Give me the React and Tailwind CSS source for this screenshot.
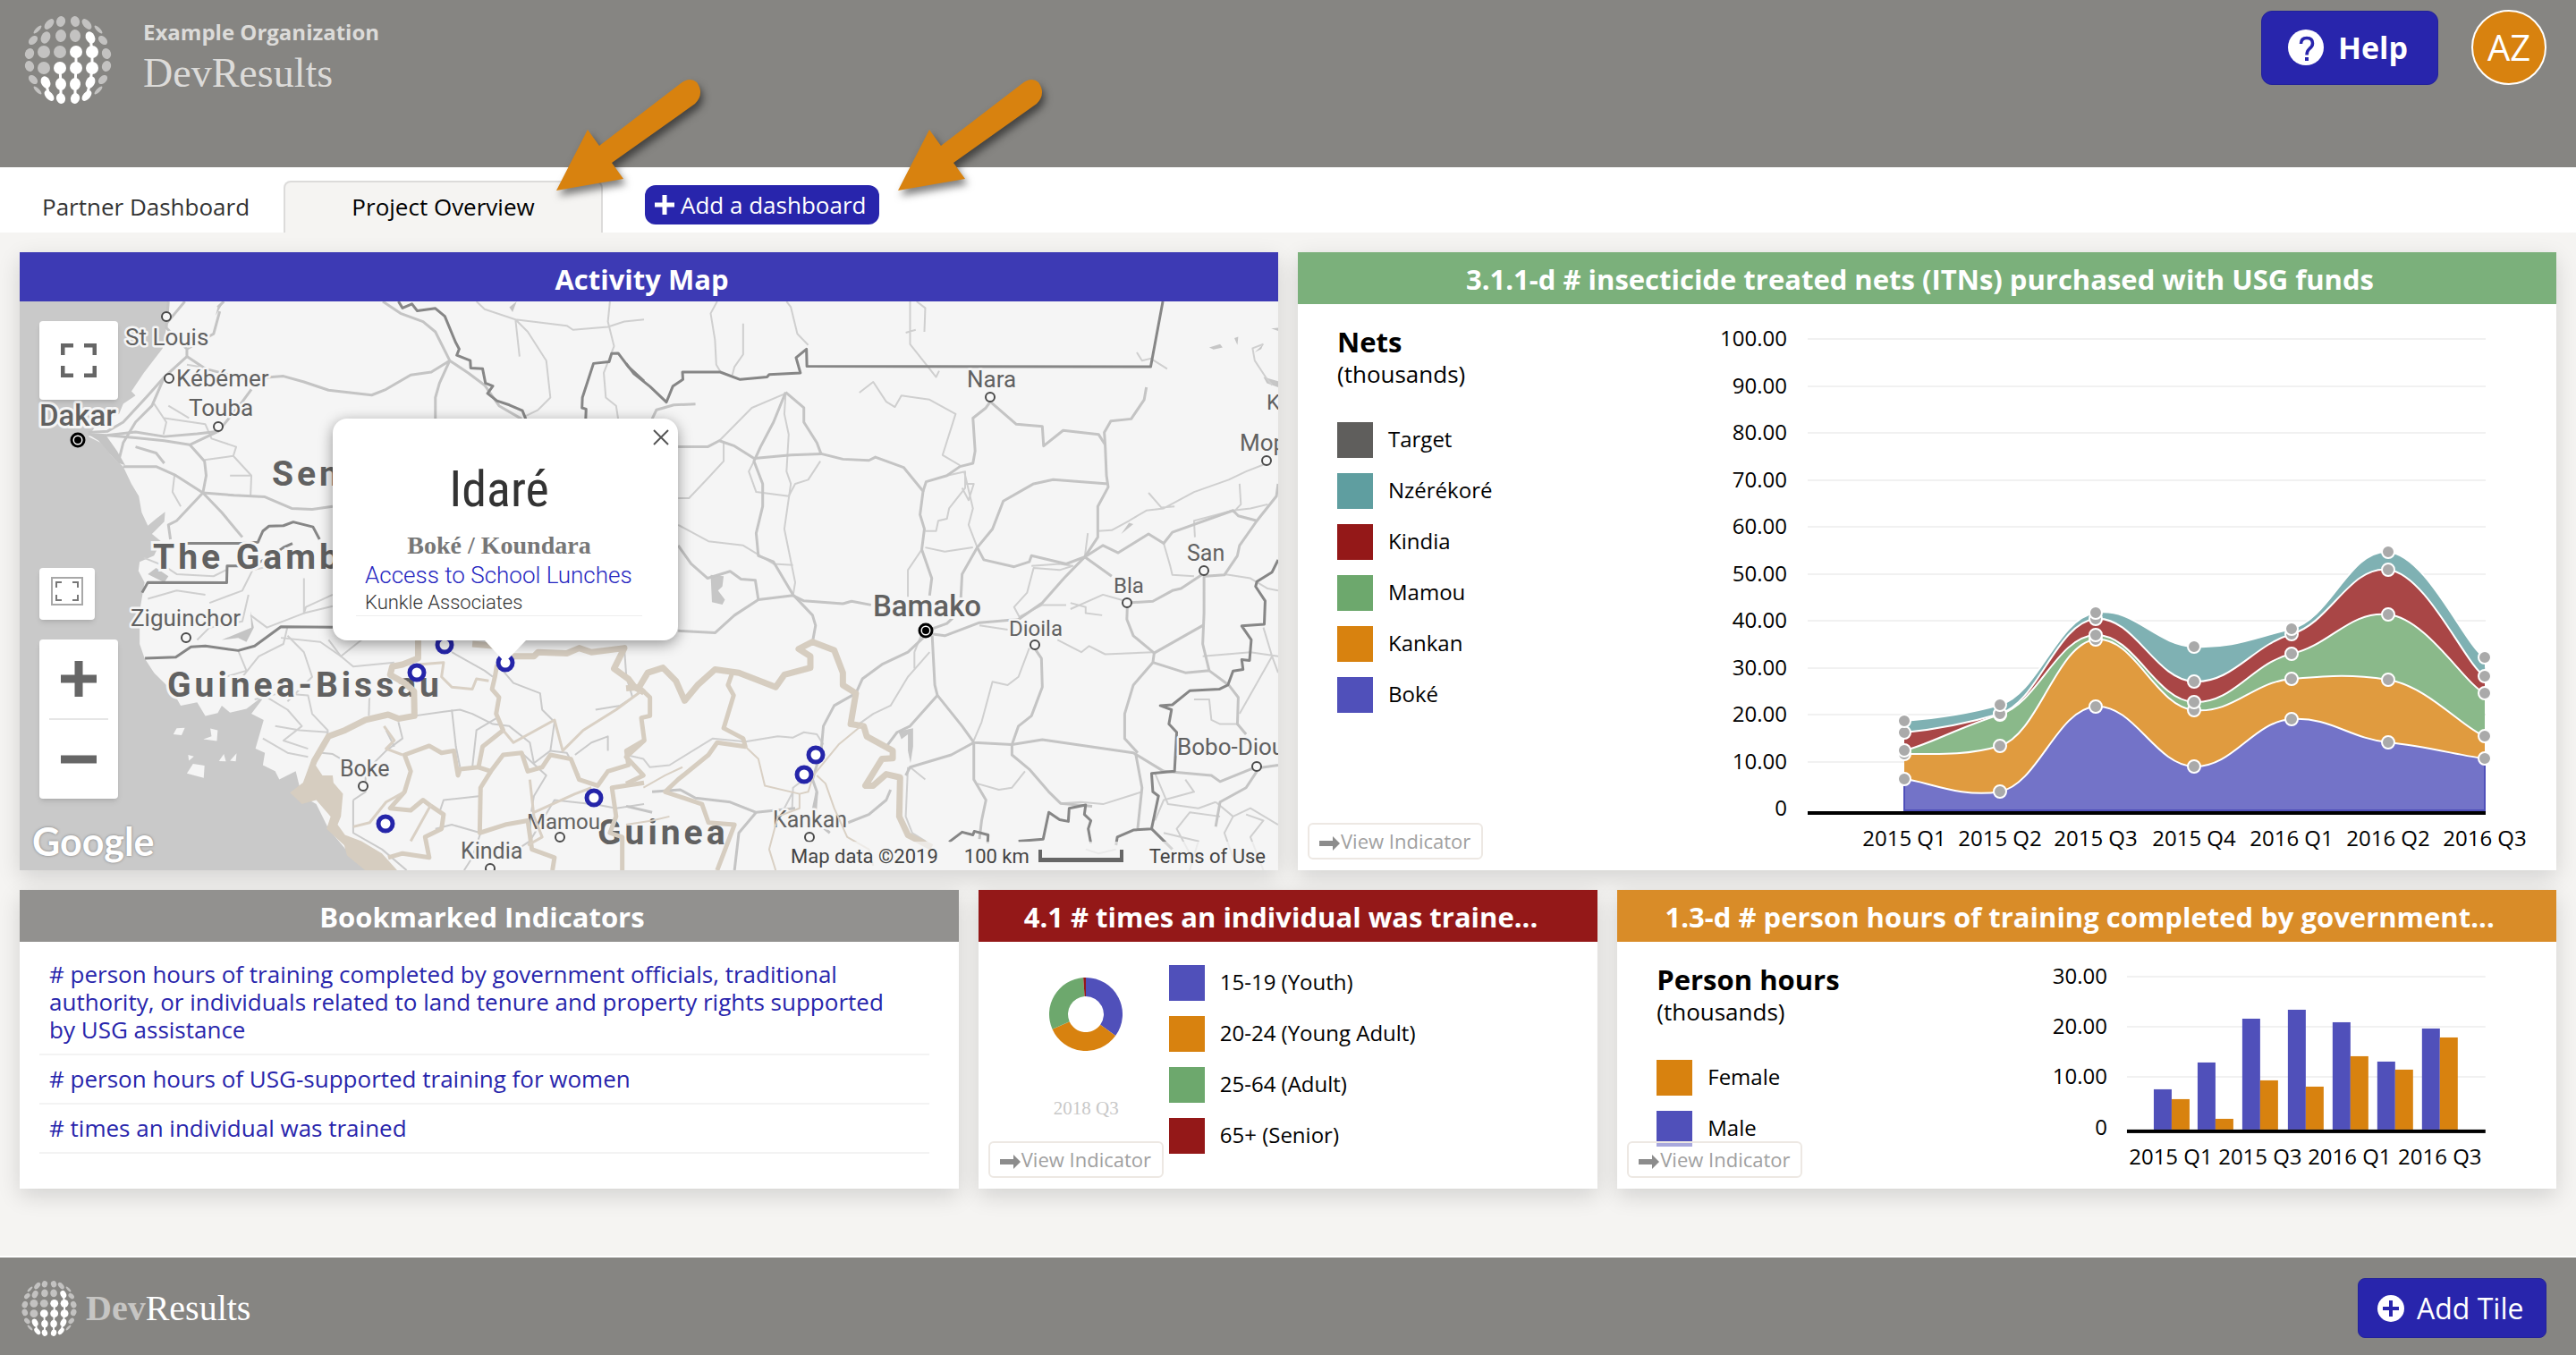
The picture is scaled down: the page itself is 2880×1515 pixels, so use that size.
import React from "react";

const SERIF = "font-['Roboto_Slab','Liberation_Serif',serif]";

/* ---------- shared pieces ---------- */

/* One quadrant of the globe: x, y, rx, ry, tilt; the others are its mirror images. */
const GLOBE_DOTS = [
  [8, 43, 5, 6, 15],
  [21, 40, 4, 7, 40],
  [34, 34, 2, 6, 45],
  [8, 27, 6, 7, 5],
  [25, 25, 5, 7, 25],
  [39, 22, 4, 6, 45],
  [9, 9, 7, 7, 0],
  [27, 9, 7, 7, 0],
  [43, 7, 5, 6, 20],
];
const LIT = ["25,-25", "9,-9", "27,-9", "-9,9", "9,9", "27,9", "-25,25", "-8,27", "8,27", "25,25", "-21,40", "-8,43", "8,43", "21,40"];

function Globe({ className }) {
  return (
    <svg viewBox="-49 -49 98 98" className={className} aria-hidden="true">
      {[[1, 1], [-1, 1], [1, -1], [-1, -1]].map(([sx, sy]) =>
        GLOBE_DOTS.map(([x, y, rx, ry, tilt]) => {
          const cx = x * sx;
          const cy = y * sy;
          return (
            <ellipse
              key={`${cx},${cy}`}
              cx={cx}
              cy={cy}
              rx={rx}
              ry={ry}
              transform={`rotate(${tilt * sx * sy} ${cx} ${cy})`}
              fill="#fff"
              opacity={LIT.includes(`${cx},${cy}`) ? 1 : 0.5}
            />
          );
        })
      )}
      <path
        d="M25 -25L27 -9M9 -9V9M27 -9V9L25 25M9 9L8 27V43M-9 9L-8 27V43M-25 25L-21 40M25 25L21 40"
        stroke="#fff"
        strokeWidth="3"
        fill="none"
      />
    </svg>
  );
}

function Arrow({ className }) {
  return (
    <svg viewBox="0 0 180 150" className={className} aria-hidden="true">
      <path
        d="M8 133L43 65L56 83L146 14Q157 5 165 12Q174 25 163 36L70 102L83 120Z"
        fill="#d8820f"
      />
    </svg>
  );
}

function Tile({ title, color, span, headHeight = "h-[58px]", children }) {
  return (
    <section className={`relative flex flex-col bg-white shadow-[0_8px_24px_rgba(0,0,0,0.14)] ${span}`}>
      <h2 className={`${headHeight} ${color} shrink-0 truncate pr-8 pl-4 text-center text-[31px] leading-[60px] font-bold text-white`}>
        {title}
      </h2>
      {children}
    </section>
  );
}

function ViewIndicator() {
  return (
    <button
      type="button"
      className="absolute bottom-3 left-[11px] flex h-[41px] w-[196px] items-center rounded-md border-2 border-[#ede8e3] bg-white/50 pl-[11px] text-[22px] text-[#a0a0a0]"
    >
      <svg viewBox="0 0 24 20" className="mt-1 h-5 w-6 shrink-0" aria-hidden="true">
        <path d="M0 7H15V2L23 10L15 18V13H0Z" fill="#8c8c8c" />
      </svg>
      <span className="whitespace-nowrap">View Indicator</span>
    </button>
  );
}

function Legend({ items }) {
  return (
    <ul className="flex flex-col gap-[17px]">
      {items.map(([label, swatch]) => (
        <li key={label} className="flex h-10 items-center gap-[17px] whitespace-nowrap text-2xl text-black">
          <span className={`size-10 shrink-0 ${swatch}`} />
          <span className="pb-0.5">{label}</span>
        </li>
      ))}
    </ul>
  );
}

/* ---------- map ---------- */

const WEST_ROADS = [
  "M410 146L405 210L455 262L455 280L400 330L360 375L300 440L262 462L215 465",
  "M455 280L500 310L600 335L690 328L740 342L800 362L905 374L940 360L1000 325L1050 318L1095 290",
  "M932 146L975 175L1030 195L1060 220L1095 290L1140 320L1180 350L1215 400L1270 432",
  "M1095 290L1070 345L1060 380L1060 432",
  "M215 470L260 472L330 464L400 475L480 468L532 462",
  "M262 472L330 478L400 485L462 495L532 462L590 390L612 360",
  "M400 330L370 400L330 440L300 490L290 530",
  "M462 495L498 535L502 570L494 612L430 680L410 690L415 725",
  "M300 548L380 548L425 568L494 612L540 660L590 720",
  "M494 612L570 618L645 622L710 650L760 652L810 645",
  "M400 540L380 515L330 500M450 146L405 200M530 160L545 146M455 262L520 225L535 170",
];
const WEST_LANES = [
  "M375 395L405 440L398 470M410 400L460 430M425 568L420 610L440 645M400 430L500 445L515 480L575 500L568 522L498 532",
  "M568 522L612 570L610 620M560 570L612 570",
  "M1160 146L1180 165L1255 190L1265 280M1255 190L1380 205L1395 215L1480 208L1520 195L1568 190M1255 190L1285 220L1330 290L1340 380L1310 410L1280 425",
  "M1485 146L1480 195L1495 255L1470 320L1475 380L1500 400L1505 432",
  "M455 300L485 305M430 340L455 330",
  "M350 770L400 790L430 810L520 815L550 800M360 870L430 850L500 860",
  "M510 880L590 850L615 800L660 790L680 770M610 910L650 940L740 905L810 888",
  "M480 970L510 940L590 925L605 860M740 820L740 905L745 890L810 860",
  "M700 938L690 980L630 1010L590 1060M700 960L740 1000L760 1060L700 1120M800 970L830 1010L860 1035L960 1025",
  "M580 996L600 1045L550 1060M684 965L780 975L830 1010L880 970L880 945M620 1115L680 1100L750 1105L760 1150L798 1190L795 1215",
  "M650 1110L700 1140L735 1180L690 1215L750 1235M900 1090L898 1155M640 1210L700 1245L750 1255M670 1180L730 1190L800 1195",
];
const EAST_OF_WEST_ROADS = [
  "M1100 1000L1180 1045L1200 1060M1009 1155L1080 1145L1120 1140L1150 1150L1200 1175L1240 1180L1290 1220L1300 1270L1340 1240L1350 1170L1320 1140L1315 1100L1250 1075L1220 1040",
  "M1520 990L1525 1060L1540 1110L1510 1130L1450 1140",
  "M860 1360L890 1340L890 1290L940 1240L980 1210L970 1170M860 1360L860 1440L930 1480L990 1531",
  "M783 1245L810 1248L865 1280M940 1190L960 1230M1100 1140L1110 1230L1120 1280",
  "M1340 1240L1380 1245L1410 1300M1400 1250L1440 1220L1480 1205L1480 1240M1070 1390L1080 1360L1170 1350",
  "M1446 1370L1500 1380L1568 1370M1210 1160L1160 1190L1150 1280M1230 1500L1290 1460L1350 1360L1440 1370",
  "M1270 1245L1330 1300L1300 1350L1290 1410M1060 1430L1100 1420L1170 1440L1150 1500L1130 1531",
];
const EAST_ROADS = [
  "M368 367L340 440L310 500L295 535L315 590L315 645L300 710L305 765L340 780L385 860L430 910L437 935L430 975",
  "M120 500L188 500L215 485L250 498L295 528L380 520L450 517L500 530L560 533L575 525L640 550L685 608L678 665L688 700L682 750L705 820L700 862",
  "M368 367L410 405L410 440L440 490L450 518",
  "M120 740L150 785L188 820L240 803L265 822L298 825L305 872L385 862L410 875L500 882L520 876L565 885",
  "M305 872L250 910L205 953L120 948",
  "M840 390L830 405L800 430L805 510L800 540L770 548L740 570L692 585L685 608",
  "M840 390L900 445L960 450L963 498L1008 460L1090 470L1105 495L1108 570L1112 598L1088 645L1088 720L1058 768L1015 785L935 765L930 780L895 792L825 775L810 745L845 700L870 632L940 590L985 580L1112 590",
  "M1105 495L1103 465L1118 437L1165 432L1195 385L1200 355M810 745L775 810L772 870",
  "M1058 768L1010 820L960 880L905 920L815 928L735 960L700 955L692 948",
  "M1058 768L1120 815M1058 768L1100 740L1135 758L1205 712L1240 735L1260 708L1400 655L1412 668L1455 680L1500 620L1504 590M1455 680L1415 740L1410 765L1380 812L1335 815",
  "M692 948L740 930L760 910M690 960L650 1000L590 1030L545 1065L530 1100L480 1130L455 1180L450 1240L430 1310L440 1340L432 1380",
  "M706 960L712 1080L718 1105L775 1180L802 1220L890 1225L960 1213L1170 1245L1240 1290",
  "M718 1105L655 1180L625 1195L600 1230M942 990L958 1015L960 1085L935 1155L905 1180L890 1225L890 1250L930 1285L975 1340L1002 1368L1075 1375",
  "M802 1220L802 1310L830 1360L820 1410L815 1455M802 1220L750 1250L655 1280L645 1300M1175 1245L1190 1330L1180 1430",
  "M1156 890L1155 920L1170 960L1218 1002L1215 1025L1170 1080L1150 1150L1150 1210L1180 1245",
  "M1156 880L1215 876L1260 850L1280 845L1333 808L1333 905L1330 980L1345 1045L1290 1050L1215 1025M1218 1002L1330 935M1345 1045L1390 1080L1412 1110L1410 1175L1430 1200",
  "M1504 1275L1440 1285L1370 1315L1350 1300L1240 1290M1455 1290L1430 1330L1370 1365L1360 1425",
  "M0 1375L60 1390M60 1340L125 1335L160 1355L240 1365L300 1390L390 1380M300 1390L260 1440L250 1531M512 1415L560 1395L600 1360L610 1335M440 1340L435 1410L470 1440",
  "M60 432L70 410L110 398L160 396",
];
const EAST_LANES = [
  "M210 146L195 175L205 240L208 300L218 318M270 200L270 275L250 305L245 325M370 146L380 160L395 225L420 252M655 146L655 250L700 310L715 330L722 315M670 146L690 162L688 220M645 222L668 215",
  "M215 485L290 405L368 370M368 370L365 420L375 470L370 560L380 590L365 700L390 830L385 862M538 368L570 342L600 390L620 403L635 375L700 385L760 420L730 520L770 545",
  "M295 535L283 560L300 610L375 620L390 590L420 580L448 535M225 490L225 535L190 575L145 625L120 625M120 690L190 730L270 740L340 785L385 788",
  "M780 560L800 650L790 690L810 745M740 570L782 560L782 600L745 650L740 675L720 680L715 705L690 705M690 745L735 755L800 745M780 590L802 590L790 630L775 600M682 750L650 800L650 865M665 1040L665 1000L680 960",
  "M1088 705L1120 703L1160 680L1200 655L1240 650L1310 610L1390 580L1430 560L1478 540M1205 612L1235 648L1265 645M1415 590L1418 640L1400 660M1480 640L1440 650L1400 655L1310 680L1312 720M1058 768L1065 710",
  "M935 790L1000 785L1030 790L1000 800L940 795L925 855L895 890L910 920M905 915L960 885L1015 885M1025 880L1060 890L1060 905L1098 910M1025 895L1100 860L1150 875M1240 735L1255 790L1260 812L1310 815M1380 810L1440 820L1480 845L1504 850",
  "M815 935L880 945M995 970L1050 1000L1068 985L1105 1005L1215 1000M1330 1010L1440 1000L1504 1010M1470 940L1490 1010L1504 1050M1490 1010L1415 1150M930 990L905 1060L880 1080L845 1072L820 1170L802 1215M700 1000L650 1060L610 1130L570 1150L530 1180",
  "M275 1218L350 1205L385 1208L410 1195L440 1200L455 1225M0 1250L40 1260L55 1280L100 1275L200 1210L275 1218M385 1340L360 1390L340 1400M410 1310L385 1330L383 1380M810 1320L860 1335L890 1330L920 1290M1002 1368L1050 1365L1100 1370L1190 1340",
  "M1220 1295L1250 1370L1320 1380L1360 1365M1290 1310L1310 1340L1240 1360L1220 1410M1360 1365L1400 1400L1440 1380L1504 1420M1310 1115L1345 1115L1350 1165L1370 1175L1410 1175M1370 1400L1300 1390L1270 1430L1300 1490M1400 1400L1380 1440L1400 1500M1430 1395L1470 1410L1440 1450L1470 1531M1240 1440L1320 1460L1300 1531",
  "M650 1280L645 1400L660 1440L690 1460M655 1280L690 1310M1060 1480L1090 1490L1130 1480M1450 290L1445 260L1470 250M1450 290L1475 330L1490 350M1178 270L1190 290L1210 285L1248 310",
];

const CITIES = [
  ["St Louis", 118, 49, 26, 164, 17],
  ["Kébémer", 175, 95, 26, 167, 86],
  ["Touba", 189, 128, 26, 222, 140],
  ["Ziguinchor", 124, 363, 26, 186, 376],
  ["Boke", 358, 531, 25, 384, 542],
  ["Mamou", 567, 590, 24, 604, 599],
  ["Kindia", 493, 623, 25, 526, 634],
  ["Nara", 1059, 96, 26, 1085, 107],
  ["K", 1394, 121, 24, null, null],
  ["Mop", 1364, 167, 26, 1394, 178],
  ["San", 1305, 290, 25, 1324, 301],
  ["Bla", 1223, 326, 24, 1238, 337],
  ["Dioila", 1106, 374, 24, 1135, 384],
  ["Bobo-Diou", 1294, 507, 26, 1383, 520],
  ["Kankan", 842, 588, 25, 883, 599],
];

const COUNTRIES = [
  ["Senegal", 282, 206],
  ["The Gambia", 149, 299],
  ["Guinea-Bissau", 165, 442],
  ["Guinea", 646, 607],
];

const SITES = [
  [475, 384],
  [444, 415],
  [543, 404],
  [642, 555],
  [409, 584],
  [890, 507],
  [877, 529],
];

function Strokes({ paths, color, width }) {
  return paths.map((d) => (
    <path key={d} d={d} stroke={color} strokeWidth={width} strokeLinejoin="round" fill="none" vectorEffect="non-scaling-stroke" />
  ));
}

function MapDrawing() {
  return (
    <svg
      viewBox="0 0 1407 636"
      preserveAspectRatio="xMidYMid slice"
      className="block h-[636px] w-full bg-[#f5f5f5] font-['Roboto',sans-serif]"
      role="img"
      aria-label="Map of Guinea and its neighbours"
    >
      <g transform="translate(-22 -67) scale(0.4592)">
        <path
          d="M40 140H410L405 210L396 260L350 320L320 365L330 375L300 395L290 420L240 440L215 475L245 490L270 520L300 548L320 590L338 620L345 660L360 692L380 675L402 658L400 682L370 712L392 730L375 765L340 780L337 802L352 830L340 900L340 980L352 1015L375 1050L420 1095L440 1130L480 1122L500 1155L530 1148L540 1130L560 1147L600 1138L650 1100L612 1150L642 1165L622 1235L645 1245L640 1275L670 1290L680 1310L720 1290L735 1350L770 1370L800 1430L850 1490L920 1540H40Z"
          fill="#c9c9c9"
        />
        <path d="M215 470L260 475L285 510L305 545L290 540L265 515L240 485ZM545 146L525 180L530 160ZM1240 160L1258 146L1248 172ZM610 900L618 940L600 975L580 965L540 970L612 940ZM360 810L380 795L410 815L400 830Z" fill="#c4c4c4" />
        <path d="M422 1200L430 1185L450 1184L442 1202ZM495 1212L515 1205L512 1186L530 1190L528 1216ZM455 1295L470 1272L498 1276L496 1306ZM458 1250L472 1254L460 1264ZM533 1265L545 1248L550 1266ZM560 1264L576 1246L574 1266Z" fill="#f5f5f5" />
        <Strokes paths={WEST_LANES} color="#cfcfcf" width="2" />
        <Strokes paths={WEST_ROADS} color="#c4c4c4" width="3" />
        <Strokes paths={EAST_OF_WEST_ROADS} color="#cacaca" width="2" />
        <Strokes
          color="#868686"
          width="3"
          paths={[
            "M970 146L980 162L1003 152L1016 169L1060 163L1083 182L1109 245L1118 262L1112 277L1145 290L1146 308L1175 310L1182 345L1200 352L1187 370L1210 388L1240 398L1272 412L1280 432",
            "M1426 432L1427 408L1417 405L1418 380L1445 297L1483 293L1489 273L1505 272L1530 305L1568 340",
            "M455 735H590L628 732L640 705L655 693L690 692L714 683L762 695L778 725",
            "M346 855L360 830L552 831L553 790L610 790L655 770L690 745L712 735",
            "M353 1015L428 1012L465 987L500 985L580 996L620 985L684 938L810 939",
          ]}
        />
      </g>
      <g transform="translate(678 -67) scale(0.4847 0.4592)">
        <path d="M195 812L225 815L222 840L212 850L228 872L222 884L198 878ZM628 1193L662 1185L662 1230L656 1270L650 1240L650 1200L635 1212ZM1470 330L1504 340V355L1478 345ZM1345 258L1370 250L1376 258L1355 263ZM1403 235L1412 232L1410 252ZM1450 270L1470 250L1465 262ZM1142 712L1160 685L1170 688ZM1488 212L1504 210V218Z" fill="#c6c6c6" />
        <Strokes paths={EAST_LANES} color="#cfcfcf" width="2" />
        <Strokes paths={EAST_ROADS} color="#c4c4c4" width="3" />
        <Strokes
          color="#868686"
          width="3"
          paths={[
            "M0 297L18 322L55 353L93 391L108 352L131 336L130 318H217L263 336L325 330L330 324L402 320L392 283L416 262L417 304L1210 305L1238 146",
            "M1504 775L1490 805L1455 828L1452 840L1474 875L1472 932L1420 936L1442 970L1438 1020L1420 1018L1423 1042L1400 1046L1388 1080L1368 1090L1300 1094L1260 1128L1232 1130L1258 1140L1252 1175L1270 1195L1265 1290L1212 1295L1215 1340L1228 1350L1212 1430L1170 1433L1133 1450L1130 1470",
            "M745 1462L775 1438L800 1445L803 1436L835 1445L834 1465M905 1460L962 1455L975 1390L1000 1408L1020 1412L1022 1380L1060 1372L1057 1395L1072 1410L1066 1430L1072 1465M1212 1430L1260 1480",
          ]}
        />
      </g>

      {COUNTRIES.map(([name, x, y]) => (
        <text key={name} x={x} y={y} fontSize="39" fontWeight="700" fill="#616161" stroke="#f5f5f5" strokeWidth="6" paintOrder="stroke" className="tracking-[4px]">
          {name}
        </text>
      ))}
      {CITIES.map(([name, x, y, size, cx, cy]) => (
        <g key={name}>
          <text x={x} y={y} fontSize={size} fill="#616161" stroke="#f5f5f5" strokeWidth="5" strokeLinejoin="round" paintOrder="stroke">
            {name}
          </text>
          {cx !== null && <circle cx={cx} cy={cy} r="5" fill="#f8f8f8" stroke="#4a4a4a" strokeWidth="2" />}
        </g>
      ))}
      {[
        ["Dakar", 22, 139, 65, 155],
        ["Bamako", 954, 352, 1013, 368],
      ].map(([name, x, y, cx, cy]) => (
        <g key={name}>
          <text x={x} y={y} fontSize="33" fontWeight="500" fill="#616161" stroke="#f5f5f5" strokeWidth="6" strokeLinejoin="round" paintOrder="stroke">
            {name}
          </text>
          <circle cx={cx} cy={cy} r="7" fill="#fff" stroke="#000" strokeWidth="3" />
          <circle cx={cx} cy={cy} r="4" />
        </g>
      ))}

      <g transform="translate(-22 -67) scale(0.4592)">
        <path
          d="M706 1342L745 1312L765 1270L785 1300L810 1300L812 1318L835 1345L830 1400L822 1420L840 1445L880 1460L930 1490L975 1540H900L845 1495L838 1470L795 1430L805 1400L770 1360L735 1370Z"
          fill="#d6cdc0"
        />
        <Strokes
          color="#d6cdc0"
          width="7"
          paths={[
            "M1018 971V1015L980 1030L955 1035L950 1055L985 1075L1008 1095L1009 1155L970 1162L945 1152L890 1165L840 1190L800 1205L765 1265L745 1320",
            "M1150 980L1205 985L1230 1010L1300 1010L1310 1000L1380 1003L1410 990L1440 1000L1520 990L1495 1040L1530 1065L1545 1085L1568 1098",
          ]}
        />
        <Strokes
          color="#d6cdc0"
          width="5"
          paths={[
            "M1210 1030L1205 1060L1198 1090L1215 1110L1208 1150L1225 1190L1175 1230L1165 1280L1120 1285L1115 1300L1105 1240L1075 1245L1045 1228L985 1250L1000 1290L985 1340L950 1380L1000 1385L1030 1360L1050 1375L1080 1395L1075 1430L1035 1450L1045 1500L980 1490L945 1500",
            "M1165 1280L1195 1290L1225 1250L1270 1245L1285 1290L1320 1280L1340 1250L1390 1260L1410 1310L1455 1325L1480 1290L1530 1275L1525 1240L1568 1215",
            "M1195 1290L1170 1330L1168 1440L1230 1420L1285 1410L1295 1480L1350 1500L1345 1531",
            "M1568 1318L1490 1330L1500 1400L1485 1440L1515 1450V1531",
          ]}
        />
        <Strokes
          color="#d9d0c4"
          width="3"
          paths={[
            "M1018 1030L1080 1025L1075 1060L1100 1085L1150 1090L1160 1065L1190 1070",
            "M935 1180L960 1215L940 1235L980 1250M1225 1190L1250 1220L1350 1165L1370 1240L1420 1190L1500 1140L1568 1090",
            "M860 1425L900 1415L940 1365L985 1340M1000 1460L1050 1370M1290 1310L1300 1400L1320 1450L1285 1470M1300 1390L1400 1345L1440 1330",
          ]}
        />
      </g>
      <g transform="translate(678 -67) scale(0.4847 0.4592)">
        <Strokes
          color="#d6cdc0"
          width="7"
          paths={[
            "M0 1088L30 1085L50 1050L85 1038L115 1070L135 1118L165 1080L205 1042L260 1050L345 1085L365 1055L425 1038L425 1010L398 992L430 975L480 995L500 1050L500 1080L530 1100L518 1175L548 1180L555 1205L615 1240V1258L590 1260L552 1325H570L600 1297L632 1305L630 1400L650 1445L705 1475",
          ]}
        />
        <Strokes
          color="#d6cdc0"
          width="5"
          paths={[
            "M245 1050L235 1080L248 1105L225 1185L270 1210L275 1230L210 1220L190 1250L120 1310L90 1340L175 1370L190 1415L250 1420L225 1490L210 1531",
            "M30 1085L55 1110V1155L35 1160L42 1215L0 1255L40 1300L0 1320",
          ]}
        />
        <Strokes
          color="#d9d0c4"
          width="2"
          paths={[
            "M275 1230L305 1260L320 1325L400 1345L420 1340L432 1300L490 1225L530 1190L548 1175",
            "M400 1345L400 1380L350 1400L330 1480L345 1531M440 1300L460 1320L480 1380L510 1450L560 1480L570 1520M0 1420L60 1410L100 1400M40 1330L90 1300L130 1280",
          ]}
        />
      </g>

      {SITES.map(([x, y]) => (
        <circle key={`${x}-${y}`} cx={x} cy={y} r="8" fill="#fff" stroke="#2525a9" strokeWidth="5" />
      ))}
    </svg>
  );
}

function MapTile() {
  return (
    <Tile title="Activity Map" color="bg-[#3d3ab4]" headHeight="h-[55px]" span="col-span-4">
      <div className="relative overflow-hidden font-['Roboto',sans-serif]">
        <MapDrawing />

        <button type="button" aria-label="Toggle fullscreen" className="absolute top-[22px] left-[22px] flex size-[88px] items-center justify-center rounded bg-white shadow-md">
          <svg viewBox="0 0 40 38" className="h-[38px] w-10" aria-hidden="true">
            <path d="M2 13V2H14M26 2H38V13M38 25V36H26M14 36H2V25" stroke="#666" strokeWidth="5" fill="none" />
          </svg>
        </button>
        <button type="button" aria-label="Fit to bounds" className="absolute top-[298px] left-[22px] flex h-[58px] w-[62px] items-center justify-center rounded bg-white pb-1.5 shadow-md">
          <svg viewBox="0 0 36 32" className="h-8 w-9" aria-hidden="true">
            <rect x="1" y="1" width="34" height="30" stroke="#a8a8a8" strokeWidth="2" fill="none" />
            <path d="M6 12V6H12M24 6H30V12M30 20V26H24M12 26H6V20" stroke="#777" strokeWidth="2" fill="none" />
          </svg>
        </button>
        <div className="absolute top-[378px] left-[22px] flex w-[88px] flex-col items-center rounded bg-white shadow-md">
          <button type="button" aria-label="Zoom in" className="flex h-[88px] w-full items-center justify-center">
            <svg viewBox="0 0 40 40" className="size-10" aria-hidden="true">
              <path d="M20 0V40M0 20H40" stroke="#666" strokeWidth="9" />
            </svg>
          </button>
          <span className="h-0.5 w-[66px] bg-[#e6e6e6]" />
          <button type="button" aria-label="Zoom out" className="flex h-[88px] w-full items-center justify-center">
            <svg viewBox="0 0 40 40" className="size-10" aria-hidden="true">
              <path d="M0 20H40" stroke="#666" strokeWidth="9" />
            </svg>
          </button>
        </div>

        <span className="absolute bottom-1 left-3.5 font-['Lato',sans-serif] text-[43px] leading-[56px] font-bold text-white [text-shadow:0_0_3px_#777]">
          Google
        </span>

        <div className="absolute right-0 bottom-0 flex h-8 items-center bg-[#f5f5f5]/70 pr-3.5 pl-2 text-[22px] text-[#444]">
          <span>Map data ©2019</span>
          <span className="ml-[29px]">100 km</span>
          <span className="ml-2.5 h-[14px] w-[95px] border-x-4 border-b-[5px] border-[#666]" />
          <a href="#terms" className="ml-[29px]">Terms of Use</a>
        </div>

        <div className="absolute top-[131px] left-[350px] h-[248px] w-[386px] rounded-2xl bg-white pt-8 pr-10 pl-[26px] shadow-[0_4px_16px_rgba(0,0,0,0.4)]">
          <button type="button" aria-label="Close" className="absolute top-3 right-2.5">
            <svg viewBox="0 0 18 18" className="size-[18px]" aria-hidden="true">
              <path d="M1 1L17 17M17 1L1 17" stroke="#555" strokeWidth="2" />
            </svg>
          </button>
          <h3 className="text-center font-['Roboto_Condensed','Liberation_Sans_Narrow',Roboto,sans-serif] text-[56px] leading-[94px] text-[#333]">
            Idaré
          </h3>
          <div className="border-b border-[#eee] px-2.5">
            <p className={`${SERIF} text-center text-[28px] leading-8 font-bold whitespace-nowrap text-[#777]`}>Boké / Koundara</p>
            <a href="#lunches" className="block text-[26px] leading-[34px] font-light whitespace-nowrap text-[#2525c0]">Access to School Lunches</a>
            <p className="text-[22px] leading-7 font-light text-[#333]">Kunkle Associates</p>
          </div>
          <svg viewBox="0 0 46 24" className="absolute top-full left-[170px] h-6 w-[46px]" aria-hidden="true">
            <path d="M0 0H46L24 23Q22 24 21 23Z" fill="#fff" />
          </svg>
        </div>
      </div>
    </Tile>
  );
}

/* ---------- area chart ---------- */

const QUARTERS = ["2015 Q1", "2015 Q2", "2015 Q3", "2015 Q4", "2016 Q1", "2016 Q2", "2016 Q3"];
const AREA_X = [229, 336, 443, 553, 662, 770, 878];
const SERIES = [
  { name: "Nzérékoré", fill: "#5f9ea0", y: [466, 448, 345, 383, 363, 277, 395] },
  { name: "Kindia", fill: "#941818", y: [479, 458, 352, 422, 369, 297, 416] },
  { name: "Mamou", fill: "#6da86d", y: [499, 459, 370, 445, 391, 347, 435] },
  { name: "Kankan", fill: "#d8820f", y: [503, 494, 375, 454, 419, 420, 483] },
  { name: "Boké", fill: "#5050ba", y: [531, 545, 450, 517, 464, 490, 508] },
];

function curve(ys) {
  const p = AREA_X.map((x, i) => [x, ys[i]]);
  let d = `M${p[0][0]} ${p[0][1]}`;
  for (let i = 0; i < p.length - 1; i++) {
    const a = p[Math.max(i - 1, 0)];
    const b = p[i];
    const c = p[i + 1];
    const e = p[Math.min(i + 2, p.length - 1)];
    d += `C${b[0] + (c[0] - a[0]) / 5} ${b[1] + (c[1] - a[1]) / 10} ${c[0] - (e[0] - b[0]) / 5} ${c[1] - (e[1] - b[1]) / 10} ${c[0]} ${c[1]}`;
  }
  return d;
}

function bandPath(i) {
  const top = curve(SERIES[i].y);
  return `${top}L878 567H229Z`;
}

function AreaChart() {
  return (
    <svg viewBox="0 0 958 633" preserveAspectRatio="xMaxYMin meet" className="h-[633px] min-w-0 flex-1 font-['Open_Sans',sans-serif]" role="img" aria-label="Nets purchased per quarter">
      {Array.from({ length: 11 }, (_, i) => {
        const y = 564 - i * 52.5;
        return (
          <g key={i}>
            {i > 0 && <rect x="121" y={Math.round(y - 1)} width="758" height="2" fill="#f1f1f1" />}
            <text x="98" y={Math.round(y + 8)} textAnchor="end" fontSize="24">{i === 0 ? "0" : `${i * 10}.00`}</text>
          </g>
        );
      })}
      <rect x="121" y="567" width="758" height="4" />
      {SERIES.map((s, i) => (
        <g key={s.name}>
          <path d={bandPath(i)} fill="#fff" />
          <path d={bandPath(i)} fill={s.fill} opacity="0.8" />
          <path d={curve(s.y)} stroke="#fff" strokeWidth="2" fill="none" />
        </g>
      ))}
      <path d="M229 532V566H878V509" stroke="#5050ba" strokeWidth="2" fill="none" />
      {SERIES.slice().reverse().map((s) =>
        s.y.map((y, i) => <circle key={`${s.name}-${i}`} cx={AREA_X[i]} cy={y} r="7" fill="#aaa" stroke="#fff" strokeWidth="2" />)
      )}
      {QUARTERS.map((q, i) => (
        <text key={q} x={AREA_X[i]} y="606" textAnchor="middle" fontSize="24">{q}</text>
      ))}
    </svg>
  );
}

/* ---------- bar chart ---------- */

const BARS = [
  [78, 165, 176],
  [127, 135, 198],
  [177, 86, 155],
  [228, 76, 162],
  [278, 90, 128],
  [328, 134, 143],
  [378, 97, 107],
];

function BarChart() {
  return (
    <svg viewBox="-70 0 598 276" preserveAspectRatio="xMaxYMin meet" className="h-[276px] min-w-0 flex-1 font-['Open_Sans',sans-serif]" role="img" aria-label="Person hours per quarter">
      {[["30.00", 39], ["20.00", 95], ["10.00", 151], ["0", 208]].map(([label, y]) => (
        <g key={label}>
          {label !== "0" && <rect x="48" y={y - 1} width="401" height="2" fill="#f1f1f1" />}
          <text x="26" y={y + 8} textAnchor="end" fontSize="24">{label}</text>
        </g>
      ))}
      {BARS.map(([x, male, female]) => (
        <g key={x}>
          <rect x={x} y={male} width="20" height={210 - male} fill="#5050ba" />
          <rect x={x + 20} y={female} width="20" height={210 - female} fill="#d8820f" />
        </g>
      ))}
      <rect x="48" y="210" width="401" height="4" />
      {[["2015 Q1", 97], ["2015 Q3", 197], ["2016 Q1", 297], ["2016 Q3", 398]].map(([label, x]) => (
        <text key={label} x={x} y="249" textAnchor="middle" fontSize="24">{label}</text>
      ))}
    </svg>
  );
}

/* ---------- donut ---------- */

const SLICES = [
  ["#5050ba", 0, 126],
  ["#d8820f", 126, 246],
  ["#6da86d", 246, 356],
  ["#941818", 356, 360],
];

function slicePath(from, to) {
  const at = (deg, r) => {
    const t = ((deg - 90) * Math.PI) / 180;
    return `${(r * Math.cos(t)).toFixed(2)} ${(r * Math.sin(t)).toFixed(2)}`;
  };
  return `M${at(from, 41)}A41 41 0 0 1 ${at(to, 41)}L${at(to, 20)}A20 20 0 0 0 ${at(from, 20)}Z`;
}

const BOOKMARKS = [
  "# person hours of training completed by government officials, traditional authority, or individuals related to land tenure and property rights supported by USG assistance",
  "# person hours of USG-supported training for women",
  "# times an individual was trained",
];

/* ---------- page ---------- */

export default function App() {
  return (
    <div className="relative flex min-h-screen flex-col bg-[#f5f4f2] font-['Open_Sans','Noto_Sans',sans-serif] text-[#333]">
      <header className="flex h-[187px] items-start justify-between bg-[#868582] pt-[11px] pr-[33px] pl-[27px]">
        <div className="flex items-start gap-[35px] pt-[7px]">
          <Globe className="size-[98px]" />
          <div className="text-[#dcdbd9]">
            <p className="text-2xl leading-9 font-bold">Example Organization</p>
            <h1 className={`${SERIF} text-[46px] leading-[56px]`}>DevResults</h1>
          </div>
        </div>
        <div className="flex items-center gap-[37px]">
          <button type="button" className="flex h-[83px] w-[198px] items-center gap-4 rounded-xl border border-[#22229a] bg-[#2825ac] pl-[29px] text-[34px] font-bold text-white">
            <svg viewBox="0 0 40 40" className="size-10" aria-hidden="true">
              <circle cx="20" cy="20" r="20" fill="#fff" />
              <path d="M14.500 16Q14.500 9.500 21 9.500Q27.500 9.500 27.500 15.500Q27.500 19 24 21.500Q21 24 21 28.500" stroke="#2825ac" strokeWidth="3.500" fill="none" />
              <rect x="19" y="31" width="4" height="4" fill="#2825ac" />
            </svg>
            Help
          </button>
          <button type="button" aria-label="Account AZ" className="flex size-[84px] items-center justify-center rounded-full border-2 border-white bg-[#d8820f] text-[40px] text-white">
            AZ
          </button>
        </div>
      </header>

      <nav className="flex h-[73px] items-end bg-white text-[26px]">
        <a href="#partner" className="w-[317px] pl-[47px] leading-[58px]">Partner Dashboard</a>
        <a href="#project" aria-current="page" className="h-[58px] w-[357px] rounded-t-lg border-2 border-b-0 border-[#dcdbda] bg-[#f5f4f2] text-center leading-[55px] text-black">
          Project Overview
        </a>
        <button type="button" className="mb-[9px] ml-[47px] flex h-11 w-[262px] items-center gap-1.5 rounded-xl bg-[#2825ac] pl-2.5 whitespace-nowrap text-white">
          <svg viewBox="0 0 24 24" className="size-6 shrink-0" aria-hidden="true">
            <path d="M12 1V23M1 12H23" stroke="#fff" strokeWidth="5" />
          </svg>
          Add a dashboard
        </button>
      </nav>

      <Arrow className="absolute top-20 left-[614px] h-[150px] w-[180px] drop-shadow-[3px_6px_4px_rgba(0,0,0,0.5)]" />
      <Arrow className="absolute top-20 left-[996px] h-[150px] w-[180px] drop-shadow-[3px_6px_4px_rgba(0,0,0,0.5)]" />

      <main className="grid grid-cols-8 gap-[22px] p-[22px]">
        <MapTile />

        <Tile title="3.1.1-d # insecticide treated nets (ITNs) purchased with USG funds" color="bg-[#7bb07b]" span="col-span-4">
          <div className="flex">
            <div className="w-[449px] shrink-0 pt-[22px] pl-11 text-black">
              <h3 className="text-[31px] leading-10 font-bold">Nets</h3>
              <p className="mb-[38px] text-[26px] leading-8">(thousands)</p>
              <Legend
                items={[
                  ["Target", "bg-[#5f5e5c]"],
                  ["Nzérékoré", "bg-[#5f9ea0]"],
                  ["Kindia", "bg-[#941818]"],
                  ["Mamou", "bg-[#6da86d]"],
                  ["Kankan", "bg-[#d8820f]"],
                  ["Boké", "bg-[#5050ba]"],
                ]}
              />
            </div>
            <AreaChart />
          </div>
          <ViewIndicator />
        </Tile>

        <Tile title="Bookmarked Indicators" color="bg-[#92918f]" span="col-span-3">
          <ul className="pt-2.5 pr-[33px] pl-[22px] text-[26px] leading-[31px]">
            {BOOKMARKS.map((text) => (
              <li key={text} className="border-b-2 border-[#f3f3f3] py-[11px] pr-6 pl-[11px]">
                <a href="#indicator" className="block text-[#2825ac]">{text}</a>
              </li>
            ))}
          </ul>
        </Tile>

        <Tile title="4.1 # times an individual was traine..." color="bg-[#941818]" span="col-span-2">
          <div className="flex pb-[39px]">
            <div className="flex w-[213px] shrink-0 flex-col items-center pt-10 pl-7">
              <svg viewBox="-41 -41 82 82" className="size-[82px]" role="img" aria-label="Individuals trained by age group">
                {SLICES.map(([fill, from, to]) => (
                  <path key={fill} d={slicePath(from, to)} fill={fill} />
                ))}
              </svg>
              <span className={`${SERIF} mt-[50px] text-[21px] leading-7 text-[#c8c8c8]`}>2018 Q3</span>
            </div>
            <div className="pt-[26px]">
              <Legend
                items={[
                  ["15-19 (Youth)", "bg-[#5050ba]"],
                  ["20-24 (Young Adult)", "bg-[#d8820f]"],
                  ["25-64 (Adult)", "bg-[#6da86d]"],
                  ["65+ (Senior)", "bg-[#941818]"],
                ]}
              />
            </div>
          </div>
          <ViewIndicator />
        </Tile>

        <Tile title="1.3-d # person hours of training completed by government..." color="bg-[#d98c28]" span="col-span-3">
          <div className="flex">
            <div className="w-[452px] shrink-0 pt-[22px] pl-11 text-black">
              <h3 className="text-[31px] leading-10 font-bold">Person hours</h3>
              <p className="mb-[38px] text-[26px] leading-8">(thousands)</p>
              <Legend
                items={[
                  ["Female", "bg-[#d8820f]"],
                  ["Male", "bg-[#5050ba]"],
                ]}
              />
            </div>
            <BarChart />
          </div>
          <ViewIndicator />
        </Tile>
      </main>

      <footer className="mt-auto flex h-[111px] items-center justify-between border-t-2 border-white bg-[#868582] pt-1 pr-[33px] pl-6">
        <div className="flex items-center gap-2.5">
          <Globe className="size-[62px]" />
          <span className={`${SERIF} text-[40px] font-bold text-[#c6c5c3]`}>
            Dev<span className="font-normal text-white">Results</span>
          </span>
        </div>
        <button type="button" className="flex h-[67px] w-[211px] items-center gap-3.5 rounded-lg border border-[#22229a] bg-[#2825ac] pl-[21px] text-[32px] whitespace-nowrap text-white">
          <svg viewBox="0 0 30 30" className="size-[30px] shrink-0" aria-hidden="true">
            <circle cx="15" cy="15" r="15" fill="#fff" />
            <path d="M15 6V24M6 15H24" stroke="#2825ac" strokeWidth="4" />
          </svg>
          Add Tile
        </button>
      </footer>
    </div>
  );
}
